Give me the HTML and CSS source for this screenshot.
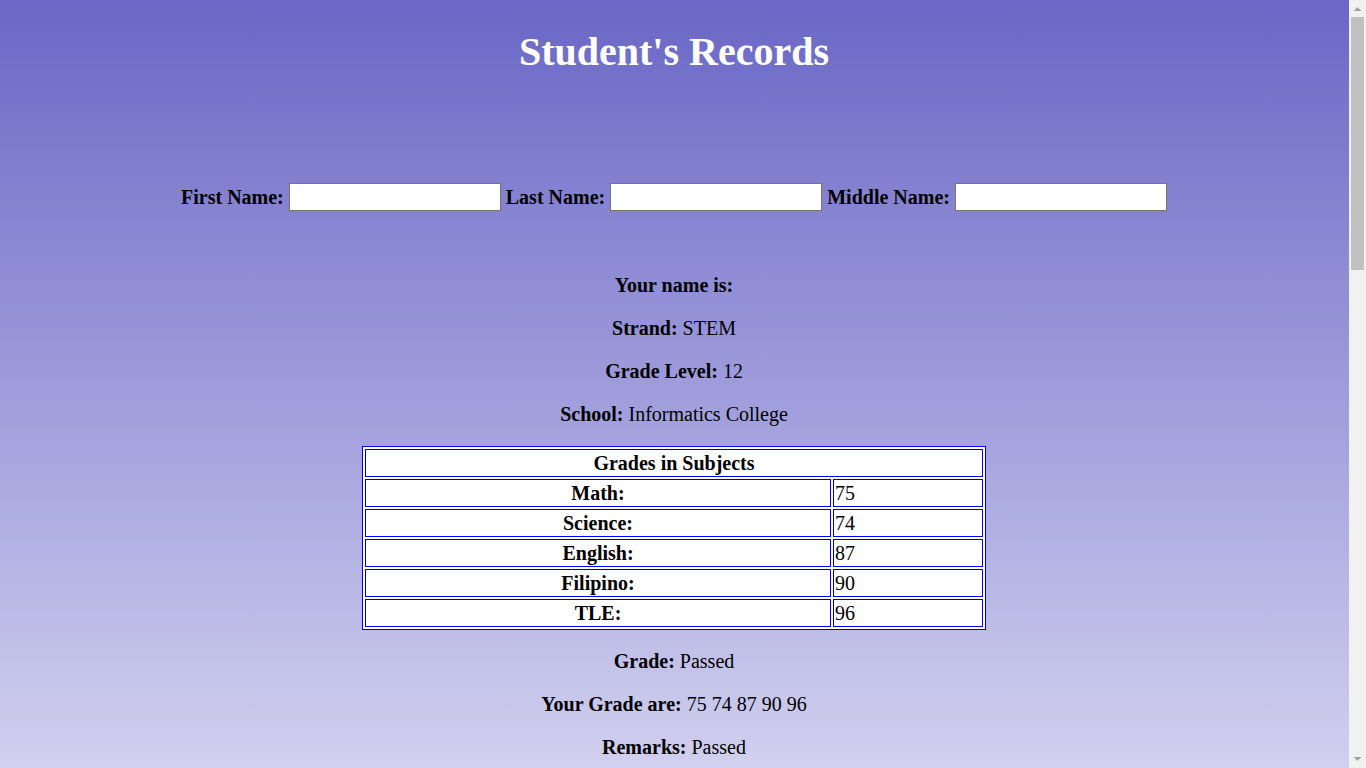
FILE: index.html
```html
<!DOCTYPE html>
<html>
<head>
<meta charset="utf-8">
<title>Student's Records</title>
<link rel="stylesheet" href="styles.css">
</head>
<body>
<h1 class="title">Student's Records</h1>
<form class="name-form">
<label class="lbl">First Name:</label> <input class="field" type="text"> <label class="lbl">Last Name:</label> <input class="field" type="text"> <label class="lbl">Middle Name:</label> <input class="field" type="text">
</form>
<div class="info">
<p><b>Your name is:</b></p>
<p><b>Strand:</b> STEM</p>
<p><b>Grade Level:</b> 12</p>
<p><b>School:</b> Informatics College</p>
<table class="grades">
<tr><th colspan="2">Grades in Subjects</th></tr>
<tr><th class="subj">Math:</th><td>75</td></tr>
<tr><th class="subj">Science:</th><td>74</td></tr>
<tr><th class="subj">English:</th><td>87</td></tr>
<tr><th class="subj">Filipino:</th><td>90</td></tr>
<tr><th class="subj">TLE:</th><td>96</td></tr>
</table>
<p><b>Grade:</b> Passed</p>
<p><b>Your Grade are:</b> 75 74 87 90 96</p>
<p><b>Remarks:</b> Passed</p>
</div>
<div class="scrollbar" aria-hidden="true">
<div class="sb-btn sb-up"><svg width="17" height="17" viewBox="0 0 17 17"><polygon points="4.5,11 12.5,11 8.5,7" fill="#a3a3a3"/></svg></div>
<div class="sb-track"><div class="sb-thumb"></div></div>
<div class="sb-btn sb-down"><svg width="17" height="17" viewBox="0 0 17 17"><polygon points="4.5,6 12.5,6 8.5,10" fill="#a3a3a3"/></svg></div>
</div>
</body>
</html>
```
FILE: styles.css
```css
html {
  background: linear-gradient(to bottom, #6a67c6 0px, #d1d0ef 768px) fixed;
  background-color: #d1d0ef;
  padding-right: 18px;
}
body {
  margin: 8px;
  font-family: "Liberation Serif", "Times New Roman", serif;
  color: #000;
  min-height: 2212px;
  text-align: center;
}
.title {
  font-size: 40px;
  line-height: 46px;
  margin: 21px 0 0;
  color: #fff;
  font-weight: bold;
}
.name-form {
  margin: 108px 0 0;
  font-size: 20px;
  line-height: 28px;
  display: block;
}
.lbl {
  font-weight: bold;
}
.field {
  box-sizing: border-box;
  width: 212px;
  height: 28px;
  border: 1px solid #767676;
  background: #fff;
  padding: 1px 2px;
  vertical-align: top;
  margin: 0;
  font-size: 16px;
}
.info {
  margin-top: 63px;
  font-size: 20px;
  line-height: 23px;
}
.info p {
  margin: 20px 0;
}
.grades {
  margin: 0 auto;
  width: 624px;
  border: 1px outset #0000ff;
  border-spacing: 2px;
  background: #fff;
  font-size: 20px;
}
.grades th,
.grades td {
  border: 1px inset #0000ff;
  padding: 1px;
  height: 28px;
  box-sizing: border-box;
  line-height: 23px;
}
.grades td {
  text-align: left;
  width: 150px;
}
.scrollbar {
  position: fixed;
  top: 0;
  right: 0;
  width: 17px;
  height: 100vh;
  background: #f1f1f1;
  display: flex;
  flex-direction: column;
}
.sb-btn {
  height: 17px;
  flex: none;
}
.sb-btn svg {
  display: block;
}
.sb-track {
  flex: 1;
  padding: 0 2px;
}
.sb-thumb {
  height: 253px;
  background: #c1c1c1;
}
```
